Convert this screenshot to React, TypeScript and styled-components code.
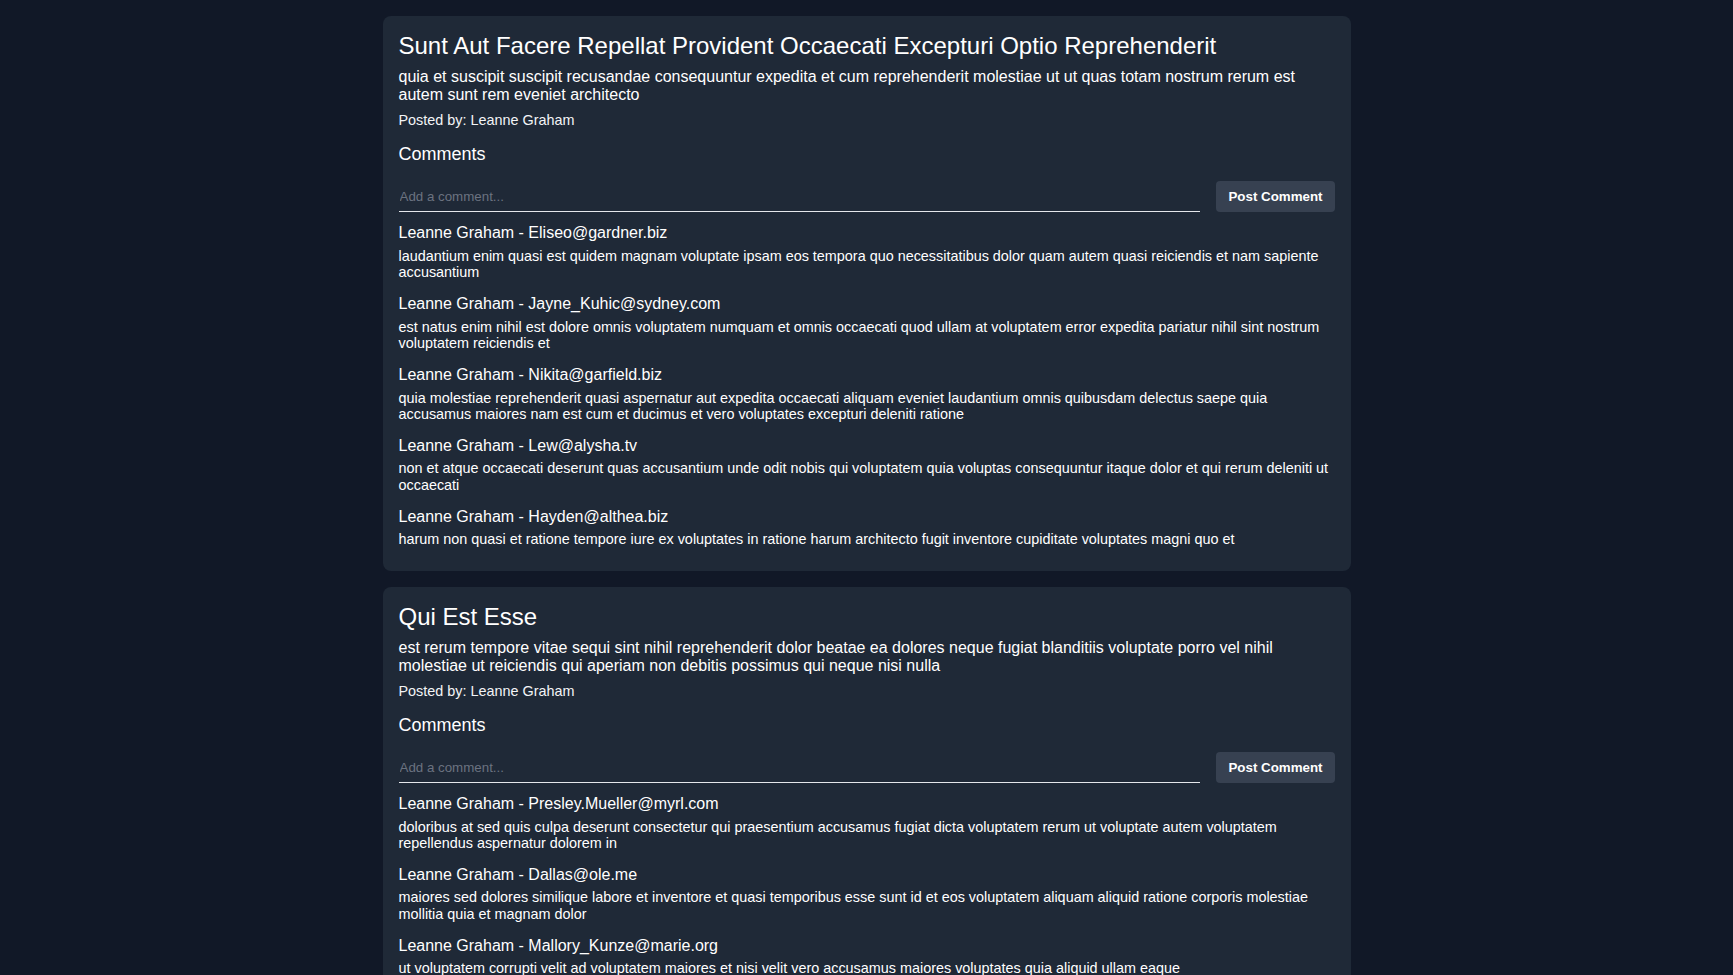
import React from "react";
import styled, { createGlobalStyle } from "styled-components";

const Global = createGlobalStyle`
  html, body { margin: 0; padding: 0; background: #111827; }
  body { font-family: "Liberation Sans", Arial, sans-serif; color: #f9fafb; }
  * { box-sizing: border-box; }
`;

const Page = styled.main`
  display: flex;
  flex-direction: column;
  align-items: center;
  gap: 16px;
  padding: 16px 0;
  min-height: 100vh;
`;

const Card = styled.article`
  width: 968px;
  background: #1f2937;
  border-radius: 8px;
  padding: 16px 16px 23px;
  display: flex;
  flex-direction: column;
`;

const Title = styled.h2`
  margin: 0 0 8px;
  font-size: 24px;
  font-weight: 400;
  line-height: 28px;
  color: #ffffff;
`;

const Body = styled.p`
  margin: 0 0 7px;
  font-size: 16px;
  line-height: 18.4px;
  color: #ffffff;
`;

const Author = styled.p`
  margin: 0;
  font-size: 14.4px;
  line-height: 16px;
  color: #f3f4f6;
`;

const SectionTitle = styled.h3`
  margin: 16px 0 0;
  font-size: 18px;
  font-weight: 400;
  line-height: 21px;
  color: #ffffff;
`;

const Form = styled.form`
  display: flex;
  gap: 16px;
  margin: 16.5px 0 12px;
  height: 31px;
`;

const Input = styled.input`
  flex: 1;
  min-width: 0;
  background: transparent;
  border: none;
  border-bottom: 1px solid #e5e7eb;
  padding: 0 1px;
  font-family: "Liberation Sans", Arial, sans-serif;
  font-size: 13.333px;
  color: #f9fafb;
  outline: none;
  &::placeholder { color: #6b7280; }
`;

const Button = styled.button`
  background: #374151;
  border: none;
  border-radius: 4px;
  padding: 0 12px;
  color: #ffffff;
  font-family: "Liberation Sans", Arial, sans-serif;
  font-size: 13.333px;
  font-weight: 700;
  cursor: pointer;
`;

const CommentList = styled.ul`
  list-style: none;
  margin: 0;
  padding: 0;
  display: flex;
  flex-direction: column;
  gap: 14.5px;
`;

const Comment = styled.li`
  display: flex;
  flex-direction: column;
  gap: 5px;
`;

const CommentHead = styled.div`
  font-size: 16px;
  line-height: 18.4px;
  color: #ffffff;
`;

const CommentBody = styled.div`
  font-size: 14.4px;
  line-height: 16.5px;
  color: #ffffff;
`;

type C = { email: string; body: string };
type P = { title: string; body: string; comments: C[] };

const posts: P[] = [
  {
    title: "Sunt Aut Facere Repellat Provident Occaecati Excepturi Optio Reprehenderit",
    body: "quia et suscipit suscipit recusandae consequuntur expedita et cum reprehenderit molestiae ut ut quas totam nostrum rerum est autem sunt rem eveniet architecto",
    comments: [
      { email: "Eliseo@gardner.biz", body: "laudantium enim quasi est quidem magnam voluptate ipsam eos tempora quo necessitatibus dolor quam autem quasi reiciendis et nam sapiente accusantium" },
      { email: "Jayne_Kuhic@sydney.com", body: "est natus enim nihil est dolore omnis voluptatem numquam et omnis occaecati quod ullam at voluptatem error expedita pariatur nihil sint nostrum voluptatem reiciendis et" },
      { email: "Nikita@garfield.biz", body: "quia molestiae reprehenderit quasi aspernatur aut expedita occaecati aliquam eveniet laudantium omnis quibusdam delectus saepe quia accusamus maiores nam est cum et ducimus et vero voluptates excepturi deleniti ratione" },
      { email: "Lew@alysha.tv", body: "non et atque occaecati deserunt quas accusantium unde odit nobis qui voluptatem quia voluptas consequuntur itaque dolor et qui rerum deleniti ut occaecati" },
      { email: "Hayden@althea.biz", body: "harum non quasi et ratione tempore iure ex voluptates in ratione harum architecto fugit inventore cupiditate voluptates magni quo et" },
    ],
  },
  {
    title: "Qui Est Esse",
    body: "est rerum tempore vitae sequi sint nihil reprehenderit dolor beatae ea dolores neque fugiat blanditiis voluptate porro vel nihil molestiae ut reiciendis qui aperiam non debitis possimus qui neque nisi nulla",
    comments: [
      { email: "Presley.Mueller@myrl.com", body: "doloribus at sed quis culpa deserunt consectetur qui praesentium accusamus fugiat dicta voluptatem rerum ut voluptate autem voluptatem repellendus aspernatur dolorem in" },
      { email: "Dallas@ole.me", body: "maiores sed dolores similique labore et inventore et quasi temporibus esse sunt id et eos voluptatem aliquam aliquid ratione corporis molestiae mollitia quia et magnam dolor" },
      { email: "Mallory_Kunze@marie.org", body: "ut voluptatem corrupti velit ad voluptatem maiores et nisi velit vero accusamus maiores voluptates quia aliquid ullam eaque" },
      { email: "Meghan_Littel@rene.us", body: "sapiente assumenda molestiae atque adipisci laborum distinctio aperiam et ab ut omnis et occaecati aspernatur odit sit rem expedita quas enim ipsam minus" },
      { email: "Carmen_Keeling@caroline.name", body: "voluptate iusto quis nobis reprehenderit ipsum amet nulla quia quas dolores velit et non aut quia necessitatibus nostrum quaerat nulla et accusamus nisi facilis" },
    ],
  },
];

export default function App() {
  return (
    <>
      <Global />
      <Page>
        {posts.map((p) => (
          <Card key={p.title}>
            <Title>{p.title}</Title>
            <Body>{p.body}</Body>
            <Author>Posted by: Leanne Graham</Author>
            <SectionTitle>Comments</SectionTitle>
            <Form onSubmit={(e) => e.preventDefault()}>
              <Input placeholder="Add a comment..." />
              <Button type="submit">Post Comment</Button>
            </Form>
            <CommentList>
              {p.comments.map((c) => (
                <Comment key={c.email}>
                  <CommentHead>Leanne Graham - {c.email}</CommentHead>
                  <CommentBody>{c.body}</CommentBody>
                </Comment>
              ))}
            </CommentList>
          </Card>
        ))}
      </Page>
    </>
  );
}
